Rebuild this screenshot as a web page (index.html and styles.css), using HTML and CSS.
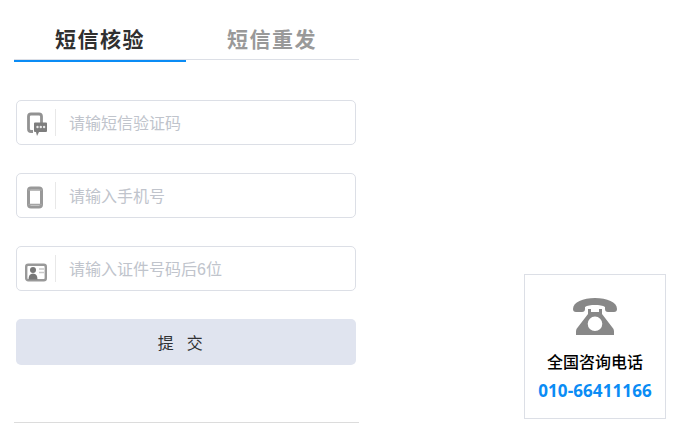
FILE: index.html
```html
<!DOCTYPE html>
<html lang="zh-CN">
<head>
<meta charset="utf-8">
<title>短信核验</title>
<link rel="stylesheet" href="styles.css">
</head>
<body>
<div class="page">
  <main class="panel">
    <div class="tabs">
      <div class="tab active">短信核验</div>
      <div class="tab">短信重发</div>
    </div>
    <form class="form">
      <label class="field">
        <span class="icon">
          <svg width="22" height="26" viewBox="0 0 22 26"><path d="M8 21.500H6q-2.500 0-2.500-2.500V6.500q0-2.500 2.500-2.500h8q2.500 0 2.500 2.500V13" fill="none" stroke="#929292" stroke-width="2.800"/><path d="M10 12.500h11q1 0 1 1v7.500q0 1-1 1h-7l-2 4-1-4h-1q-1 0-1-1v-7.500q0-1 1-1z" fill="#7d7d7d"/><circle cx="12.500" cy="17" r="1.200" fill="#e8e8e8"/><circle cx="15.800" cy="17" r="1.200" fill="#e8e8e8"/><circle cx="19.100" cy="17" r="1.200" fill="#e8e8e8"/></svg>
        </span>
        <input class="input" type="text" placeholder="请输短信验证码" aria-label="短信验证码">
      </label>
      <label class="field">
        <span class="icon">
          <svg width="22" height="26" viewBox="0 0 22 26"><rect x="3.500" y="5" width="13" height="19" rx="2.500" fill="none" stroke="#999" stroke-width="3"/><path d="M3 21.500h14M3 7h14" stroke="#a5a5a5" stroke-width="1.500"/></svg>
        </span>
        <input class="input" type="text" placeholder="请输入手机号" aria-label="手机号">
      </label>
      <label class="field">
        <span class="icon">
          <svg width="22" height="26" viewBox="0 0 22 26"><rect x="1.200" y="8.700" width="19.600" height="15.600" rx="2" fill="none" stroke="#999" stroke-width="2.400"/><circle cx="8" cy="14" r="3" fill="#777"/><path d="M3.500 23.500q0-6 4.500-6t4.500 6z" fill="#777"/><path d="M14 13h5M14 16.500h5" stroke="#c8c8c8" stroke-width="1.600"/></svg>
        </span>
        <input class="input" type="text" placeholder="请输入证件号码后6位" aria-label="证件号码后6位">
      </label>
      <button class="submit" type="button">提 交</button>
    </form>
    <div class="rule"></div>
  </main>
  <aside class="contact">
    <svg class="phone" width="44" height="37" viewBox="0 0 44 37"><path d="M0 11C0 4 10 0 22 0s22 4 22 11c0 2-1 3-3 3h-6c-2 0-3-1-3-3V9c-2-1.500-6-2-10-2s-8 .5-10 2v2c0 2-1 3-3 3H3c-2 0-3-1-3-3z" fill="#888"/><path fill-rule="evenodd" d="M15 11h3v3h8v-3h3v5l10 13q2 2 2 4v4H3v-4q0-2 2-4l10-13zM22 18.500a7.300 7.300 0 1 0 0 14.600 7.300 7.300 0 0 0 0-14.600z" fill="#888"/></svg>
    <div class="contact-title">全国咨询电话</div>
    <div class="contact-number">010-66411166</div>
  </aside>
</div>
</body>
</html>
```
FILE: styles.css
```css
* { box-sizing: border-box; }
html, body { margin: 0; padding: 0; background: #fff; }
body {
  width: 681px;
  height: 435px;
  overflow: hidden;
  font-family: "Liberation Sans", "Noto Sans CJK SC", sans-serif;
}
.page {
  display: flex;
  align-items: flex-start;
  padding: 20px 0 0 14px;
}
.panel { width: 345px; flex: none; }
.tabs {
  display: flex;
  height: 40px;
  border-bottom: 1px solid #dcdfe6;
}
.tab {
  width: 172px;
  height: 42px;
  text-align: center;
  font-size: 21px;
  line-height: 39px;
  font-weight: 700;
  letter-spacing: 1.500px;
  color: #999;
}
.tab.active {
  color: #303030;
  border-bottom: 2px solid #0a8cf5;
}
.form {
  display: flex;
  flex-direction: column;
  gap: 28px;
  width: 340px;
  margin: 40px 0 0 2px;
}
.field {
  display: flex;
  align-items: center;
  height: 45px;
  border: 1px solid #dcdfe6;
  border-radius: 5px;
  background: #fff;
}
.icon {
  display: flex;
  align-items: center;
  justify-content: center;
  width: 39px;
  height: 27px;
  flex: none;
  border-right: 1px solid #e8e8e8;
}
.input {
  flex: 1;
  min-width: 0;
  height: 100%;
  padding: 2px 0 0 13px;
  border: 0;
  outline: 0;
  background: transparent;
  font-family: inherit;
  font-size: 16px;
}
.input::placeholder { color: #c0c4cc; opacity: 1; }
.submit {
  height: 46px;
  padding: 0 7px 0 0;
  border: 0;
  border-radius: 5px;
  background: #e0e4ef;
  color: #303133;
  font-family: inherit;
  font-size: 16px;
  letter-spacing: 4.300px;
}
.rule {
  margin-top: 57px;
  border-top: 1px solid #dcdcdc;
}
.contact {
  display: flex;
  flex-direction: column;
  align-items: center;
  width: 142px;
  height: 145px;
  flex: none;
  margin: 254px 0 0 165px;
  padding-top: 23px;
  border: 1px solid #dcdfe6;
}
.contact-title {
  margin-top: 16px;
  font-size: 16px;
  line-height: 24px;
  font-weight: 500;
  color: #000;
}
.contact-number {
  margin-top: 4px;
  font-size: 17px;
  line-height: 24px;
  font-weight: 700;
  letter-spacing: 0.100px;
  color: #0a8cf5;
  font-family: "Open Sans", "Noto Sans CJK SC", sans-serif;
}
```
